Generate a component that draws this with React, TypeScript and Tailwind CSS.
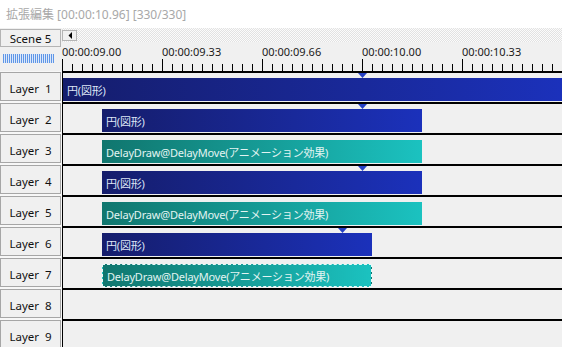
const FONT = "font-['Noto_Sans','Noto_Sans_CJK_JP',sans-serif]";

type Row = {
  kind?: "blue" | "teal";
  ml?: string;
  w?: string;
  text?: string;
  mark?: string;
  dashed?: boolean;
};

const rows: Row[] = [
  { kind: "blue", ml: "ml-0", w: "flex-1", text: "円(図形)", mark: "left-[295px]" },
  { kind: "blue", ml: "ml-[39px]", w: "w-[320px]", text: "円(図形)", mark: "left-[295px]" },
  { kind: "teal", ml: "ml-[39px]", w: "w-[320px]", text: "DelayDraw@DelayMove(アニメーション効果)" },
  { kind: "blue", ml: "ml-[39px]", w: "w-[320px]", text: "円(図形)", mark: "left-[295px]" },
  { kind: "teal", ml: "ml-[39px]", w: "w-[320px]", text: "DelayDraw@DelayMove(アニメーション効果)" },
  { kind: "blue", ml: "ml-[39px]", w: "w-[270px]", text: "円(図形)", mark: "left-[275px]" },
  { kind: "teal", ml: "ml-[39px]", w: "w-[270px]", text: "DelayDraw@DelayMove(アニメーション効果)", dashed: true },
  {},
  {},
];

const labels = ["00:00:09.00", "00:00:09.33", "00:00:09.66", "00:00:10.00", "00:00:10.33"];

const Marker = ({ pos }: { pos: string }) => (
  <svg width="9" height="5" className={`absolute top-0 ${pos}`}>
    <polygon points="0,0 9,0 4.5,5" fill="#2440c4" />
  </svg>
);

const Ticks = () => (
  <svg width="500" height="12" shapeRendering="crispEdges" className="block">
    {Array.from({ length: 50 }, (_, i) => (
      <line key={i} x1={i * 10 + 0.5} x2={i * 10 + 0.5} y1={i % 10 === 0 ? 0 : 5} y2={12} stroke="#000" />
    ))}
  </svg>
);

export default function App() {
  return (
    <div className={`w-[562px] h-[347px] overflow-hidden bg-white ${FONT}`}>
      {/* title */}
      <div className="h-[28px] flex items-center pl-[6px] pt-[2px] text-[12px] text-[#a8a8a8]">
        拡張編集 [00:00:10.96] [330/330]
      </div>

      {/* header: scene + ruler */}
      <div className="flex h-[43px]">
        <div className="w-[62px] bg-[#f0f0f0] pt-[1px]">
          <div className="w-[61px] h-[18px] pt-[2px] border border-[#b4b4b4] bg-[#f0f0f0] flex items-center justify-center text-[11.5px] text-[#111]">
            Scene 5
          </div>
          <div className="mt-[7px] ml-[3px] w-[51px] h-[9px] bg-[repeating-linear-gradient(90deg,#5f96e6_0_1px,#dce8fa_1px_2px)]" />
        </div>
        <div className="flex-1 flex flex-col">
          <div className="h-[14px] pt-[2px] bg-[repeating-conic-gradient(#e2e2e2_0_25%,#fbfbfb_0_50%)] bg-[length:2px_2px]">
            <div className="w-[15px] h-[11px] border border-[#b4b4b4] bg-[#f0f0f0] flex items-center justify-center">
              <svg width="4" height="7">
                <polygon points="4,0 4,7 0.5,3.5" fill="#000" />
              </svg>
            </div>
          </div>
          <div className="flex-1 bg-[#f0f0f0] flex flex-col">
            <div className="flex h-[17px] pt-[2px] text-[11px] leading-[15px] text-[#1a1a1a]">
              {labels.map((l) => (
                <div key={l} className="w-[100px] shrink-0">{l}</div>
              ))}
            </div>
            <Ticks />
          </div>
        </div>
      </div>

      {/* layers */}
      {rows.map((r, i) => (
        <div key={i} className="flex h-[31px]">
          <div className="w-[62px] bg-[#f7f7f7]">
            <div className="w-[61px] h-[29px] mt-[1px] pt-[4px] border border-[#a6a6a6] bg-[#f0f0f0] flex items-center justify-center text-[11.5px] text-[#111] whitespace-pre">
              {`Layer  ${i + 1}`}
            </div>
          </div>
          <div className="flex-1 relative bg-[#f0f0f0] border-t-2 border-l border-black flex">
            {r.kind && (
              <div
                className={`${r.ml} ${r.w} mt-[5px] h-[23px] pt-[4px] flex items-center pl-[4px] text-[11px] tracking-[-0.2px] whitespace-nowrap overflow-hidden ${
                  r.kind === "blue"
                    ? "bg-linear-to-r from-[#151d6c] to-[#1b31bb] text-[#dfe6f6]"
                    : "bg-linear-to-r from-[#10766e] to-[#1bc2c0] text-[#e2f4f2]"
                } ${r.dashed ? "border border-dashed border-[#e8f8f8] pl-[3px]" : ""}`}
              >
                {r.text}
              </div>
            )}
            {r.mark && <Marker pos={r.mark} />}
          </div>
        </div>
      ))}
    </div>
  );
}
